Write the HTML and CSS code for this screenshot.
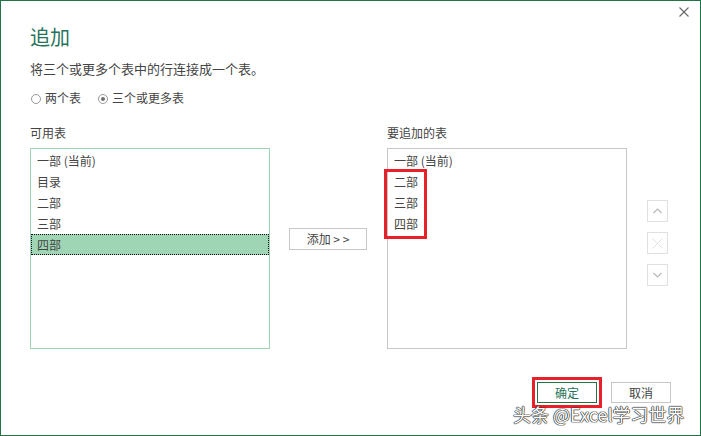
FILE: index.html
```html
<!DOCTYPE html>
<html>
<head>
  <meta charset="utf-8">
  <title>追加</title>
  <link rel="stylesheet" href="styles.css">
</head>
<body>
  <div class="dialog">
    <div class="titlebar">
      <svg class="close" width="10" height="10" viewBox="0 0 10 10">
        <path d="M0.5 0.5 L9.5 9.5 M9.5 0.5 L0.5 9.5" stroke="#666" stroke-width="1.1" fill="none"/>
      </svg>
    </div>
    <div class="content">
      <h1 class="title">追加</h1>
      <p class="desc">将三个或更多个表中的行连接成一个表。</p>
      <div class="radios">
        <label class="radio"><span class="circle"></span>两个表</label>
        <label class="radio checked"><span class="circle"></span>三个或更多表</label>
      </div>

      <div class="columns">
        <div class="col">
          <div class="col-label">可用表</div>
          <div class="listbox available">
            <div class="item">一部 (当前)</div>
            <div class="item">目录</div>
            <div class="item">二部</div>
            <div class="item">三部</div>
            <div class="item selected">四部</div>
          </div>
        </div>

        <div class="middle">
          <button class="btn add">添加 &gt; &gt;</button>
        </div>

        <div class="col">
          <div class="col-label">要追加的表</div>
          <div class="listbox chosen">
            <div class="item">一部 (当前)</div>
            <div class="item">二部</div>
            <div class="item">三部</div>
            <div class="item">四部</div>
            <div class="annot"></div>
          </div>
        </div>

        <div class="side">
          <button class="side-btn">
            <svg width="9" height="6" viewBox="0 0 9 6"><path d="M0.5 5 L4.5 1 L8.5 5" stroke="#b8b8b8" stroke-width="1.2" fill="none"/></svg>
          </button>
          <button class="side-btn">
            <svg width="11" height="11" viewBox="0 0 11 11"><path d="M0.5 0.5 L10.5 10.5 M10.5 0.5 L0.5 10.5" stroke="#e3e3e3" stroke-width="1" fill="none"/></svg>
          </button>
          <button class="side-btn">
            <svg width="9" height="6" viewBox="0 0 9 6"><path d="M0.5 1 L4.5 5 L8.5 1" stroke="#b8b8b8" stroke-width="1.2" fill="none"/></svg>
          </button>
        </div>
      </div>

      <div class="footer">
        <div class="mark">
          <button class="btn ok">确定</button>
        </div>
        <button class="btn cancel">取消</button>
      </div>
    </div>
    <div class="watermark">头条 @Excel学习世界</div>
  </div>
</body>
</html>
```

FILE: styles.css
```css
* {
  margin: 0;
  padding: 0;
  box-sizing: border-box;
}

body {
  font-family: "Noto Sans CJK SC", "Noto Sans", sans-serif;
  background-color: #fff;
}

.dialog {
  position: relative;
  width: 701px;
  height: 436px;
  border: 1px solid #217346;
  color: #444;
  overflow: hidden;
}

.titlebar {
  height: 23px;
  display: flex;
  justify-content: flex-end;
  align-items: flex-start;
  padding: 6px 11px 0 0;
}

.content {
  padding: 0 29px;
}

.title {
  font-size: 20px;
  line-height: 26px;
  font-weight: normal;
  color: #26735a;
}

.desc {
  margin-top: 10px;
  font-size: 13px;
  line-height: 18px;
}

.radios {
  display: flex;
  margin-top: 11px;
  font-size: 12px;
  line-height: 18px;
}

.radio {
  display: flex;
  align-items: center;
  margin-right: 16px;
}

.circle {
  width: 10px;
  height: 10px;
  border: 1px solid #9a9a9a;
  border-radius: 50%;
  margin: 1px 4px 0 1px;
  display: flex;
  align-items: center;
  justify-content: center;
}

.radio.checked .circle::after {
  content: "";
  width: 4px;
  height: 4px;
  border-radius: 50%;
  background-color: #6f6f6f;
}

.columns {
  display: flex;
  margin-top: 17px;
}

.col {
  width: 240px;
}

.col-label {
  font-size: 12px;
  line-height: 18px;
  margin-bottom: 6px;
}

.listbox {
  position: relative;
  height: 201px;
  border: 1px solid #c6c6c6;
  padding-top: 1px;
}

.listbox.available {
  border-color: #9fd4b6;
}

.item {
  height: 21px;
  line-height: 21px;
  padding-left: 6px;
  font-size: 12px;
  white-space: nowrap;
}

.item.selected {
  background-color: #9fd4b5;
  border: 1px dotted #111;
  line-height: 19px;
  padding-left: 5px;
}

.annot {
  position: absolute;
  left: -4px;
  top: 20px;
  width: 43px;
  height: 70px;
  border: 3px solid #e8202a;
}

.middle {
  width: 78px;
  margin: 0 20px 0 19px;
  padding-top: 101px;
}

.btn {
  font-family: inherit;
  font-size: 12px;
  color: #444;
  background-color: #fff;
  border: 1px solid #c6c6c6;
  cursor: pointer;
}

.btn.add {
  width: 78px;
  height: 22px;
}

.side {
  display: flex;
  flex-direction: column;
  gap: 10px;
  margin-left: 20px;
  padding-top: 76px;
}

.side-btn {
  width: 21px;
  height: 22px;
  border: 1px solid #e0e0e0;
  background-color: #fff;
  display: flex;
  align-items: center;
  justify-content: center;
}

.footer {
  display: flex;
  justify-content: flex-end;
  align-items: center;
  gap: 9px;
  margin-top: 28px;
}

.mark {
  border: 3px solid #e8202a;
  padding: 2px;
}

.btn.ok,
.btn.cancel {
  width: 60px;
  height: 21px;
  display: block;
}

.btn.ok {
  border-color: #217346;
  color: #26735a;
}

.watermark {
  position: absolute;
  left: 512px;
  top: 400px;
  font-size: 18px;
  line-height: 26px;
  color: #fff;
  white-space: nowrap;
  text-shadow: 0 0 1px #222, 0 0 1px #222, 0 0 1px #222, 0 0 1px #222;
}
```
